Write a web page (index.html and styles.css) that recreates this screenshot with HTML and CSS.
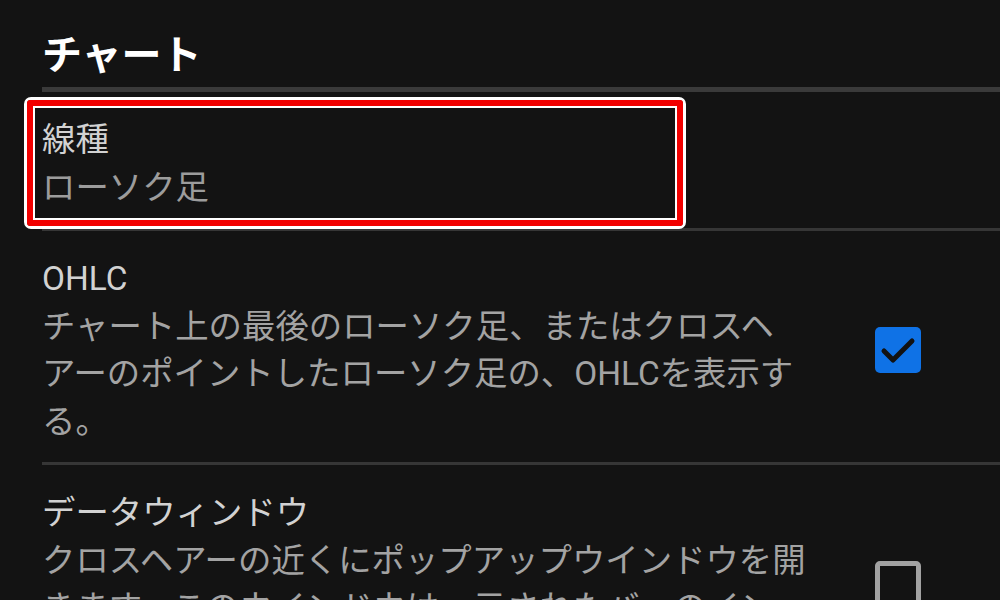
FILE: index.html
```html
<!DOCTYPE html>
<html lang="ja">
<head>
<meta charset="utf-8">
<title>チャート</title>
<link rel="stylesheet" href="styles.css">
</head>
<body>
<div class="screen">
  <div class="section-header">
    <h1 class="section-title">チャート</h1>
  </div>
  <div class="pref-list">
    <div class="pref-row pref-row--highlighted">
      <div class="pref-text">
        <div class="pref-title">線種</div>
        <div class="pref-summary pref-summary--value">ローソク足</div>
      </div>
      <div class="highlight-frame"><div class="highlight-inner"></div></div>
    </div>
    <div class="pref-row">
      <div class="pref-text">
        <div class="pref-title">OHLC</div>
        <div class="pref-summary">チャート上の最後のローソク足、またはクロスヘアーのポイントしたローソク足の、OHLCを表示する。</div>
      </div>
      <div class="checkbox checkbox--checked">
        <svg viewBox="0 0 46 46" width="46" height="46" aria-hidden="true">
          <rect x="0" y="0" width="46" height="46" rx="5" ry="5" fill="#0f72e6"/>
          <polyline points="9,24 18,33 37,14" fill="none" stroke="#121212" stroke-width="5" stroke-linecap="round" stroke-linejoin="round"/>
        </svg>
      </div>
    </div>
    <div class="pref-row">
      <div class="pref-text">
        <div class="pref-title">データウィンドウ</div>
        <div class="pref-summary">クロスヘアーの近くにポップアップウインドウを開きます。このウインドウは、示されたバーのインデックス、日時、OHLC値などを表示します。</div>
      </div>
      <div class="checkbox checkbox--unchecked"></div>
    </div>
  </div>
</div>
</body>
</html>
```

FILE: styles.css
```css
html, body {
  margin: 0;
  padding: 0;
  overflow: hidden;
  background: #131313;
}

body {
  font-family: "Roboto", "Noto Sans CJK JP", sans-serif;
  color: #cfcfcf;
}

.screen {
  width: 1000px;
  height: 600px;
  overflow: hidden;
  background: #131313;
}

.section-header {
  margin-left: 42px;
  padding: 28px 0 11px;
  border-bottom: 5px solid #3a3a3a;
}

.section-title {
  margin: 0;
  font-family: "Noto Sans CJK JP", sans-serif;
  font-size: 40px;
  line-height: 48px;
  font-weight: 700;
  color: #ffffff;
}

.pref-list {
  margin-left: 42px;
}

.pref-row {
  position: relative;
  display: flex;
  align-items: center;
  padding: 24px 0 17px;
  border-bottom: 3px solid #363636;
}

.pref-text {
  flex: 0 0 775px;
  width: 775px;
  font-size: 33.4px;
  line-height: 47.5px;
  line-break: strict;
}

.pref-title {
  color: #d2d2d2;
}

.pref-summary {
  color: #a3a3a3;
}

.pref-summary--value {
  color: #9c9c9c;
}

.checkbox {
  flex: 0 0 46px;
  width: 46px;
  height: 46px;
  margin-left: 58px;
  box-sizing: border-box;
}

.checkbox svg {
  display: block;
}

.checkbox--unchecked {
  border: 5px solid #a2a2a2;
  border-radius: 5px;
}

.highlight-frame {
  position: absolute;
  left: -18px;
  top: 5px;
  width: 662px;
  height: 132px;
  box-sizing: border-box;
  border: 3px solid #ffffff;
  border-radius: 7px;
  pointer-events: none;
}

.highlight-inner {
  box-sizing: border-box;
  width: 100%;
  height: 100%;
  border: 6px solid #f20000;
  border-radius: 3px;
  box-shadow: inset 0 0 0 2px #ffffff;
}
```
